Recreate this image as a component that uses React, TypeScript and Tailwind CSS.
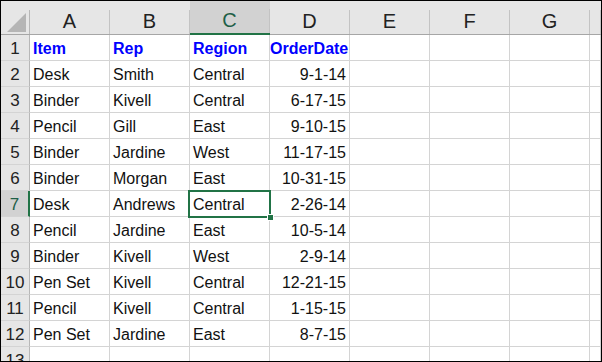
import React from 'react';

const cols = ['A', 'B', 'C', 'D', 'E', 'F', 'G', ''];

const rows: string[][] = [
    ['Item', 'Rep', 'Region', 'OrderDate'],
    ['Desk', 'Smith', 'Central', '9-1-14'],
    ['Binder', 'Kivell', 'Central', '6-17-15'],
    ['Pencil', 'Gill', 'East', '9-10-15'],
    ['Binder', 'Jardine', 'West', '11-17-15'],
    ['Binder', 'Morgan', 'East', '10-31-15'],
    ['Desk', 'Andrews', 'Central', '2-26-14'],
    ['Pencil', 'Jardine', 'East', '10-5-14'],
    ['Binder', 'Kivell', 'West', '2-9-14'],
    ['Pen Set', 'Kivell', 'Central', '12-21-15'],
    ['Pencil', 'Kivell', 'Central', '1-15-15'],
    ['Pen Set', 'Jardine', 'East', '8-7-15'],
    ['', '', '', ''],
];

const App = () => {
    return (
        <div className="w-[602px] h-[362px] border border-black bg-white overflow-hidden font-['Liberation_Sans',Arial,sans-serif] text-[#111]">
            {/* column headings */}
            <div className="flex h-[34px] bg-[#e6e6e6] border-b border-[#a6a6a6]">
                <div className="w-[29px] shrink-0 flex items-end justify-end">
                    <svg width="19" height="19" viewBox="0 0 19 19" className="mb-[2px] mr-[3px]">
                        <polygon points="19,0 19,19 0,19" fill="#b5b5b5" />
                    </svg>
                    <div className="w-px h-[24px] bg-[#b7b7b7]" />
                </div>
                {cols.map((c, i) => (
                    <div
                        key={i}
                        className={`${i === 7 ? 'w-[11px]' : 'w-[80px]'} shrink-0 flex items-end ${
                            c === 'C' ? 'bg-[#d2d2d2] border-b-2 border-[#217346] -mb-px' : ''
                        }`}
                    >
                        <div
                            className={`flex-1 text-center text-[20px] leading-[24px] pb-[1px] ${
                                c === 'C' ? 'text-[#1e5f47]' : 'text-[#222]'
                            }`}
                        >
                            {c}
                        </div>
                        <div className="w-px h-[24px] bg-[#c3c3c3]" />
                    </div>
                ))}
            </div>

            {/* rows */}
            {rows.map((r, ri) => {
                const isSel = ri === 6;
                const last = ri === 12;
                return (
                    <div key={ri} className={`flex ${last ? 'h-[14px] items-start' : 'h-[26px]'}`}>
                        <div
                            className={`w-[29px] shrink-0 h-[26px] flex items-center justify-center pt-[2px] text-[17px] border-b border-[#d4d4d4] ${
                                isSel
                                    ? 'bg-[#d2d2d2] text-[#1e5f47] border-r-2 border-r-[#217346]'
                                    : 'bg-[#e6e6e6] text-[#222] border-r border-r-[#b7b7b7]'
                            }`}
                        >
                            {ri + 1}
                        </div>
                        {cols.map((_, ci) => {
                            const v = r[ci] ?? '';
                            const isDate = ci === 3 && ri > 0;
                            return (
                                <div
                                    key={ci}
                                    className={`${ci === 7 ? 'w-[11px]' : 'w-[80px]'} shrink-0 h-[26px] relative flex items-center pt-[2px] border-r border-b border-[#d4d4d4] whitespace-nowrap text-[16px] ${
                                        isDate ? 'justify-end pr-[3px]' : 'pl-[3px]'
                                    } ${ri === 0 ? 'font-bold text-[#0000ff] overflow-visible' : ''}`}
                                >
                                    {ri === 0 && ci === 3 ? <span className="-ml-[3px]">{v}</span> : v}
                                    {isSel && ci === 2 && (
                                        <>
                                            <div className="absolute z-10 -left-[2px] -top-px w-[83px] h-[28px] border-2 border-[#217346]" />
                                            <div className="absolute z-20 -right-[5px] -bottom-[5px] w-[7px] h-[7px] bg-[#217346] border border-white" />
                                        </>
                                    )}
                                </div>
                            );
                        })}
                    </div>
                );
            })}
        </div>
    );
};

export default App;
